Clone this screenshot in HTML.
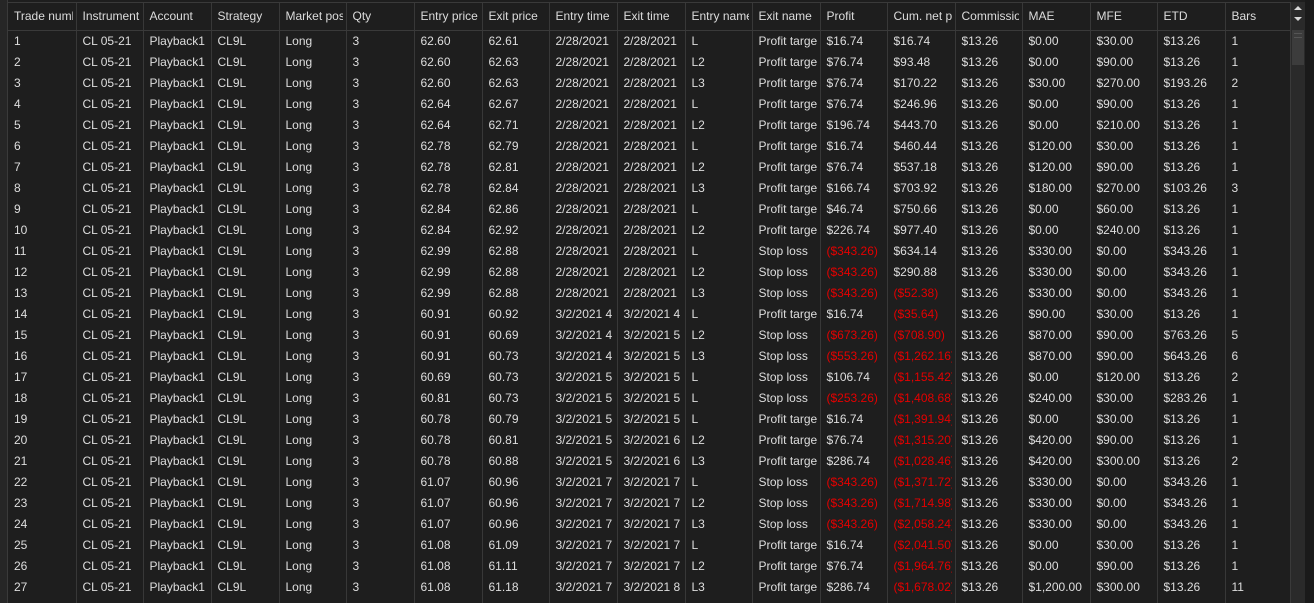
<!DOCTYPE html>
<html><head><meta charset="utf-8"><style>
html,body{margin:0;padding:0;background:#1c1c1c;width:1314px;height:603px;overflow:hidden;font-family:"Liberation Sans",Arial,sans-serif;font-size:12px;color:#dedede}
.wrap{position:absolute;left:0;top:0;width:1314px;height:603px;background:#1e1e1e;overflow:hidden}
.lb{position:absolute;left:0;top:0;width:8px;height:603px;background:#262626;border-right:1px solid #3a3a3a;box-sizing:border-box}
table{position:absolute;left:8px;top:2px;border-collapse:collapse;table-layout:fixed;width:1282px;background:#1e1e1e}
td,th{white-space:nowrap;overflow:hidden;text-overflow:clip;padding:0 0 0 6px;text-align:left;font-weight:normal;border-left:1px solid #383838;height:21px;line-height:21px}
td span,th span{display:block;overflow:hidden;margin-right:3px}
th{height:27px;line-height:27px;border-top:1px solid #3a3a3a;border-bottom:1px solid #3a3a3a;color:#dcdcdc}
tr td:first-child,tr th:first-child{border-left:none}
.r{color:#e40000}
.sb{position:absolute;left:1290px;top:2px;width:15px;height:601px;background:#2a2a2a;border-left:1px solid #3a3a3a}
.th{position:absolute;left:1px;top:28px;width:12px;height:35px;background:#3c3c3c}
.rb{position:absolute;left:1305px;top:0;width:9px;height:603px;background:#1a1a1a}
</style></head><body><div class="wrap">
<div class="lb"></div>
<table>
<colgroup><col style="width:68px"><col style="width:67px"><col style="width:68px"><col style="width:68px"><col style="width:67px"><col style="width:68px"><col style="width:68px"><col style="width:67px"><col style="width:68px"><col style="width:68px"><col style="width:67px"><col style="width:68px"><col style="width:67px"><col style="width:68px"><col style="width:67px"><col style="width:68px"><col style="width:67px"><col style="width:68px"><col style="width:65px"></colgroup>
<tr><th><span>Trade number</span></th><th><span>Instrument</span></th><th>Account</th><th>Strategy</th><th><span>Market position</span></th><th>Qty</th><th>Entry price</th><th>Exit price</th><th>Entry time</th><th>Exit time</th><th><span>Entry name</span></th><th>Exit name</th><th>Profit</th><th><span>Cum. net profit</span></th><th><span>Commission</span></th><th>MAE</th><th>MFE</th><th>ETD</th><th>Bars</th></tr>
<tr><td>1</td><td>CL 05-21</td><td>Playback1</td><td>CL9L</td><td>Long</td><td>3</td><td>62.60</td><td>62.61</td><td>2/28/2021</td><td>2/28/2021</td><td>L</td><td><span>Profit target</span></td><td>$16.74</td><td>$16.74</td><td>$13.26</td><td>$0.00</td><td>$30.00</td><td>$13.26</td><td>1</td></tr>
<tr><td>2</td><td>CL 05-21</td><td>Playback1</td><td>CL9L</td><td>Long</td><td>3</td><td>62.60</td><td>62.63</td><td>2/28/2021</td><td>2/28/2021</td><td>L2</td><td><span>Profit target</span></td><td>$76.74</td><td>$93.48</td><td>$13.26</td><td>$0.00</td><td>$90.00</td><td>$13.26</td><td>1</td></tr>
<tr><td>3</td><td>CL 05-21</td><td>Playback1</td><td>CL9L</td><td>Long</td><td>3</td><td>62.60</td><td>62.63</td><td>2/28/2021</td><td>2/28/2021</td><td>L3</td><td><span>Profit target</span></td><td>$76.74</td><td>$170.22</td><td>$13.26</td><td>$30.00</td><td>$270.00</td><td>$193.26</td><td>2</td></tr>
<tr><td>4</td><td>CL 05-21</td><td>Playback1</td><td>CL9L</td><td>Long</td><td>3</td><td>62.64</td><td>62.67</td><td>2/28/2021</td><td>2/28/2021</td><td>L</td><td><span>Profit target</span></td><td>$76.74</td><td>$246.96</td><td>$13.26</td><td>$0.00</td><td>$90.00</td><td>$13.26</td><td>1</td></tr>
<tr><td>5</td><td>CL 05-21</td><td>Playback1</td><td>CL9L</td><td>Long</td><td>3</td><td>62.64</td><td>62.71</td><td>2/28/2021</td><td>2/28/2021</td><td>L2</td><td><span>Profit target</span></td><td>$196.74</td><td>$443.70</td><td>$13.26</td><td>$0.00</td><td>$210.00</td><td>$13.26</td><td>1</td></tr>
<tr><td>6</td><td>CL 05-21</td><td>Playback1</td><td>CL9L</td><td>Long</td><td>3</td><td>62.78</td><td>62.79</td><td>2/28/2021</td><td>2/28/2021</td><td>L</td><td><span>Profit target</span></td><td>$16.74</td><td>$460.44</td><td>$13.26</td><td>$120.00</td><td>$30.00</td><td>$13.26</td><td>1</td></tr>
<tr><td>7</td><td>CL 05-21</td><td>Playback1</td><td>CL9L</td><td>Long</td><td>3</td><td>62.78</td><td>62.81</td><td>2/28/2021</td><td>2/28/2021</td><td>L2</td><td><span>Profit target</span></td><td>$76.74</td><td>$537.18</td><td>$13.26</td><td>$120.00</td><td>$90.00</td><td>$13.26</td><td>1</td></tr>
<tr><td>8</td><td>CL 05-21</td><td>Playback1</td><td>CL9L</td><td>Long</td><td>3</td><td>62.78</td><td>62.84</td><td>2/28/2021</td><td>2/28/2021</td><td>L3</td><td><span>Profit target</span></td><td>$166.74</td><td>$703.92</td><td>$13.26</td><td>$180.00</td><td>$270.00</td><td>$103.26</td><td>3</td></tr>
<tr><td>9</td><td>CL 05-21</td><td>Playback1</td><td>CL9L</td><td>Long</td><td>3</td><td>62.84</td><td>62.86</td><td>2/28/2021</td><td>2/28/2021</td><td>L</td><td><span>Profit target</span></td><td>$46.74</td><td>$750.66</td><td>$13.26</td><td>$0.00</td><td>$60.00</td><td>$13.26</td><td>1</td></tr>
<tr><td>10</td><td>CL 05-21</td><td>Playback1</td><td>CL9L</td><td>Long</td><td>3</td><td>62.84</td><td>62.92</td><td>2/28/2021</td><td>2/28/2021</td><td>L2</td><td><span>Profit target</span></td><td>$226.74</td><td>$977.40</td><td>$13.26</td><td>$0.00</td><td>$240.00</td><td>$13.26</td><td>1</td></tr>
<tr><td>11</td><td>CL 05-21</td><td>Playback1</td><td>CL9L</td><td>Long</td><td>3</td><td>62.99</td><td>62.88</td><td>2/28/2021</td><td>2/28/2021</td><td>L</td><td>Stop loss</td><td class="r">($343.26)</td><td>$634.14</td><td>$13.26</td><td>$330.00</td><td>$0.00</td><td>$343.26</td><td>1</td></tr>
<tr><td>12</td><td>CL 05-21</td><td>Playback1</td><td>CL9L</td><td>Long</td><td>3</td><td>62.99</td><td>62.88</td><td>2/28/2021</td><td>2/28/2021</td><td>L2</td><td>Stop loss</td><td class="r">($343.26)</td><td>$290.88</td><td>$13.26</td><td>$330.00</td><td>$0.00</td><td>$343.26</td><td>1</td></tr>
<tr><td>13</td><td>CL 05-21</td><td>Playback1</td><td>CL9L</td><td>Long</td><td>3</td><td>62.99</td><td>62.88</td><td>2/28/2021</td><td>2/28/2021</td><td>L3</td><td>Stop loss</td><td class="r">($343.26)</td><td class="r">($52.38)</td><td>$13.26</td><td>$330.00</td><td>$0.00</td><td>$343.26</td><td>1</td></tr>
<tr><td>14</td><td>CL 05-21</td><td>Playback1</td><td>CL9L</td><td>Long</td><td>3</td><td>60.91</td><td>60.92</td><td>3/2/2021 4</td><td>3/2/2021 4</td><td>L</td><td><span>Profit target</span></td><td>$16.74</td><td class="r">($35.64)</td><td>$13.26</td><td>$90.00</td><td>$30.00</td><td>$13.26</td><td>1</td></tr>
<tr><td>15</td><td>CL 05-21</td><td>Playback1</td><td>CL9L</td><td>Long</td><td>3</td><td>60.91</td><td>60.69</td><td>3/2/2021 4</td><td>3/2/2021 5</td><td>L2</td><td>Stop loss</td><td class="r">($673.26)</td><td class="r">($708.90)</td><td>$13.26</td><td>$870.00</td><td>$90.00</td><td>$763.26</td><td>5</td></tr>
<tr><td>16</td><td>CL 05-21</td><td>Playback1</td><td>CL9L</td><td>Long</td><td>3</td><td>60.91</td><td>60.73</td><td>3/2/2021 4</td><td>3/2/2021 5</td><td>L3</td><td>Stop loss</td><td class="r">($553.26)</td><td class="r"><span>($1,262.16)</span></td><td>$13.26</td><td>$870.00</td><td>$90.00</td><td>$643.26</td><td>6</td></tr>
<tr><td>17</td><td>CL 05-21</td><td>Playback1</td><td>CL9L</td><td>Long</td><td>3</td><td>60.69</td><td>60.73</td><td>3/2/2021 5</td><td>3/2/2021 5</td><td>L</td><td>Stop loss</td><td>$106.74</td><td class="r"><span>($1,155.42)</span></td><td>$13.26</td><td>$0.00</td><td>$120.00</td><td>$13.26</td><td>2</td></tr>
<tr><td>18</td><td>CL 05-21</td><td>Playback1</td><td>CL9L</td><td>Long</td><td>3</td><td>60.81</td><td>60.73</td><td>3/2/2021 5</td><td>3/2/2021 5</td><td>L</td><td>Stop loss</td><td class="r">($253.26)</td><td class="r"><span>($1,408.68)</span></td><td>$13.26</td><td>$240.00</td><td>$30.00</td><td>$283.26</td><td>1</td></tr>
<tr><td>19</td><td>CL 05-21</td><td>Playback1</td><td>CL9L</td><td>Long</td><td>3</td><td>60.78</td><td>60.79</td><td>3/2/2021 5</td><td>3/2/2021 5</td><td>L</td><td><span>Profit target</span></td><td>$16.74</td><td class="r"><span>($1,391.94)</span></td><td>$13.26</td><td>$0.00</td><td>$30.00</td><td>$13.26</td><td>1</td></tr>
<tr><td>20</td><td>CL 05-21</td><td>Playback1</td><td>CL9L</td><td>Long</td><td>3</td><td>60.78</td><td>60.81</td><td>3/2/2021 5</td><td>3/2/2021 6</td><td>L2</td><td><span>Profit target</span></td><td>$76.74</td><td class="r"><span>($1,315.20)</span></td><td>$13.26</td><td>$420.00</td><td>$90.00</td><td>$13.26</td><td>1</td></tr>
<tr><td>21</td><td>CL 05-21</td><td>Playback1</td><td>CL9L</td><td>Long</td><td>3</td><td>60.78</td><td>60.88</td><td>3/2/2021 5</td><td>3/2/2021 6</td><td>L3</td><td><span>Profit target</span></td><td>$286.74</td><td class="r"><span>($1,028.46)</span></td><td>$13.26</td><td>$420.00</td><td>$300.00</td><td>$13.26</td><td>2</td></tr>
<tr><td>22</td><td>CL 05-21</td><td>Playback1</td><td>CL9L</td><td>Long</td><td>3</td><td>61.07</td><td>60.96</td><td>3/2/2021 7</td><td>3/2/2021 7</td><td>L</td><td>Stop loss</td><td class="r">($343.26)</td><td class="r"><span>($1,371.72)</span></td><td>$13.26</td><td>$330.00</td><td>$0.00</td><td>$343.26</td><td>1</td></tr>
<tr><td>23</td><td>CL 05-21</td><td>Playback1</td><td>CL9L</td><td>Long</td><td>3</td><td>61.07</td><td>60.96</td><td>3/2/2021 7</td><td>3/2/2021 7</td><td>L2</td><td>Stop loss</td><td class="r">($343.26)</td><td class="r"><span>($1,714.98)</span></td><td>$13.26</td><td>$330.00</td><td>$0.00</td><td>$343.26</td><td>1</td></tr>
<tr><td>24</td><td>CL 05-21</td><td>Playback1</td><td>CL9L</td><td>Long</td><td>3</td><td>61.07</td><td>60.96</td><td>3/2/2021 7</td><td>3/2/2021 7</td><td>L3</td><td>Stop loss</td><td class="r">($343.26)</td><td class="r"><span>($2,058.24)</span></td><td>$13.26</td><td>$330.00</td><td>$0.00</td><td>$343.26</td><td>1</td></tr>
<tr><td>25</td><td>CL 05-21</td><td>Playback1</td><td>CL9L</td><td>Long</td><td>3</td><td>61.08</td><td>61.09</td><td>3/2/2021 7</td><td>3/2/2021 7</td><td>L</td><td><span>Profit target</span></td><td>$16.74</td><td class="r"><span>($2,041.50)</span></td><td>$13.26</td><td>$0.00</td><td>$30.00</td><td>$13.26</td><td>1</td></tr>
<tr><td>26</td><td>CL 05-21</td><td>Playback1</td><td>CL9L</td><td>Long</td><td>3</td><td>61.08</td><td>61.11</td><td>3/2/2021 7</td><td>3/2/2021 7</td><td>L2</td><td><span>Profit target</span></td><td>$76.74</td><td class="r"><span>($1,964.76)</span></td><td>$13.26</td><td>$0.00</td><td>$90.00</td><td>$13.26</td><td>1</td></tr>
<tr><td>27</td><td>CL 05-21</td><td>Playback1</td><td>CL9L</td><td>Long</td><td>3</td><td>61.08</td><td>61.18</td><td>3/2/2021 7</td><td>3/2/2021 8</td><td>L3</td><td><span>Profit target</span></td><td>$286.74</td><td class="r"><span>($1,678.02)</span></td><td>$13.26</td><td>$1,200.00</td><td>$300.00</td><td>$13.26</td><td>11</td></tr>
<tr><td></td><td></td><td></td><td></td><td></td><td></td><td></td><td></td><td></td><td></td><td></td><td></td><td></td><td></td><td></td><td></td><td></td><td></td><td></td></tr>
</table>
<div class="sb">
<svg width="14" height="26" style="position:absolute;left:0;top:0"><path d="M3 8 L7 4 L11 8 Z" fill="#d8d8d8"/><path d="M3 15 L7 19 L11 15 Z" fill="#d8d8d8"/></svg>
<div class="th"><div style="margin:3px 2px;height:1px;background:#555"></div><div style="margin:0 2px;height:1px;background:#555"></div></div>
</div>
<div class="rb"></div>
</div></body></html>
